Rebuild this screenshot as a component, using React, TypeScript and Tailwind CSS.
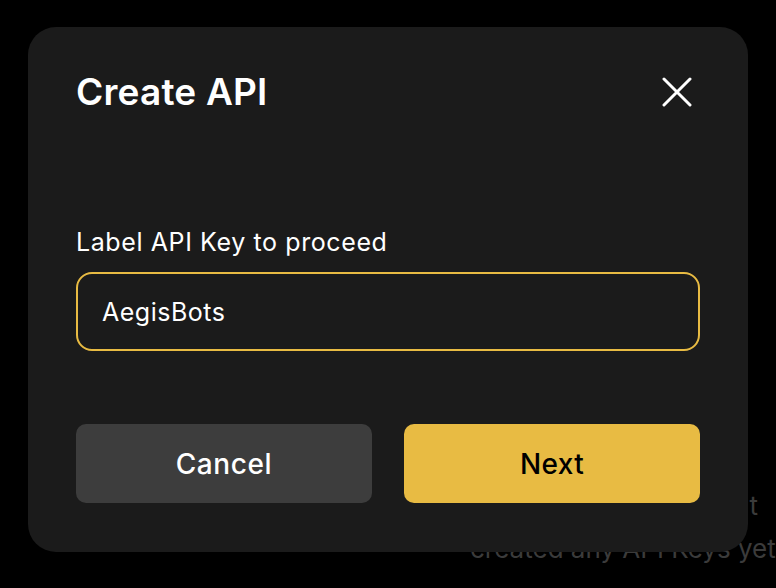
import { useState } from "react";

/** 关闭图标：两条交叉线。 */
function CloseIcon() {
  return (
    <svg width="30" height="30" viewBox="0 0 30 30" fill="none" aria-hidden>
      <path d="M2 2L28 28M28 2L2 28" stroke="white" strokeWidth="3" strokeLinecap="round" />
    </svg>
  );
}

export default function App() {
  const [label, setLabel] = useState("AegisBots");

  return (
    <div
      className="relative h-[588px] w-[776px] overflow-hidden bg-black"
      style={{ fontFamily: "Inter, 'Noto Sans', sans-serif" }}
    >
      {/* 背后的空状态文案，被弹窗遮住 */}
      <div className="absolute left-[470px] top-[484px] w-[306px] whitespace-nowrap text-[26px] leading-[43px] text-[#3b3b3b]">
        <div className="flex justify-end pr-[18px]">You haven&apos;t</div>
        <div>created any API Keys yet</div>
      </div>

      {/* 弹窗 */}
      <div className="relative ml-[28px] mt-[27px] flex h-[525px] w-[720px] flex-col rounded-[28px] bg-[#1b1b1b] px-[48px] pb-[49px] pt-[42px]">
        <div className="flex items-center justify-between">
          <h2 className="text-[37px] font-semibold leading-[46px] tracking-[0.2px] text-white">Create API</h2>
          <button type="button" aria-label="Close" className="mr-[8px] flex items-center justify-center">
            <CloseIcon />
          </button>
        </div>

        <label className="mt-[112px] text-[25px] leading-[30px] tracking-[0.6px] text-white">
          Label API Key to proceed
        </label>
        <input
          value={label}
          onChange={(e) => setLabel(e.target.value)}
          className="mt-[15px] h-[79px] w-full rounded-[16px] border-2 border-[#e8bb43] bg-transparent px-[24px] text-[25px] tracking-[0.5px] text-white outline-none"
        />

        <div className="mt-auto flex gap-[32px]">
          <button
            type="button"
            className="h-[79px] flex-1 rounded-[10px] bg-[#3d3d3d] text-[28px] font-medium tracking-[0.6px] text-white"
          >
            Cancel
          </button>
          <button
            type="button"
            className="h-[79px] flex-1 rounded-[10px] bg-[#e8bb43] text-[28px] font-medium tracking-[0.4px] text-black"
          >
            Next
          </button>
        </div>
      </div>
    </div>
  );
}
